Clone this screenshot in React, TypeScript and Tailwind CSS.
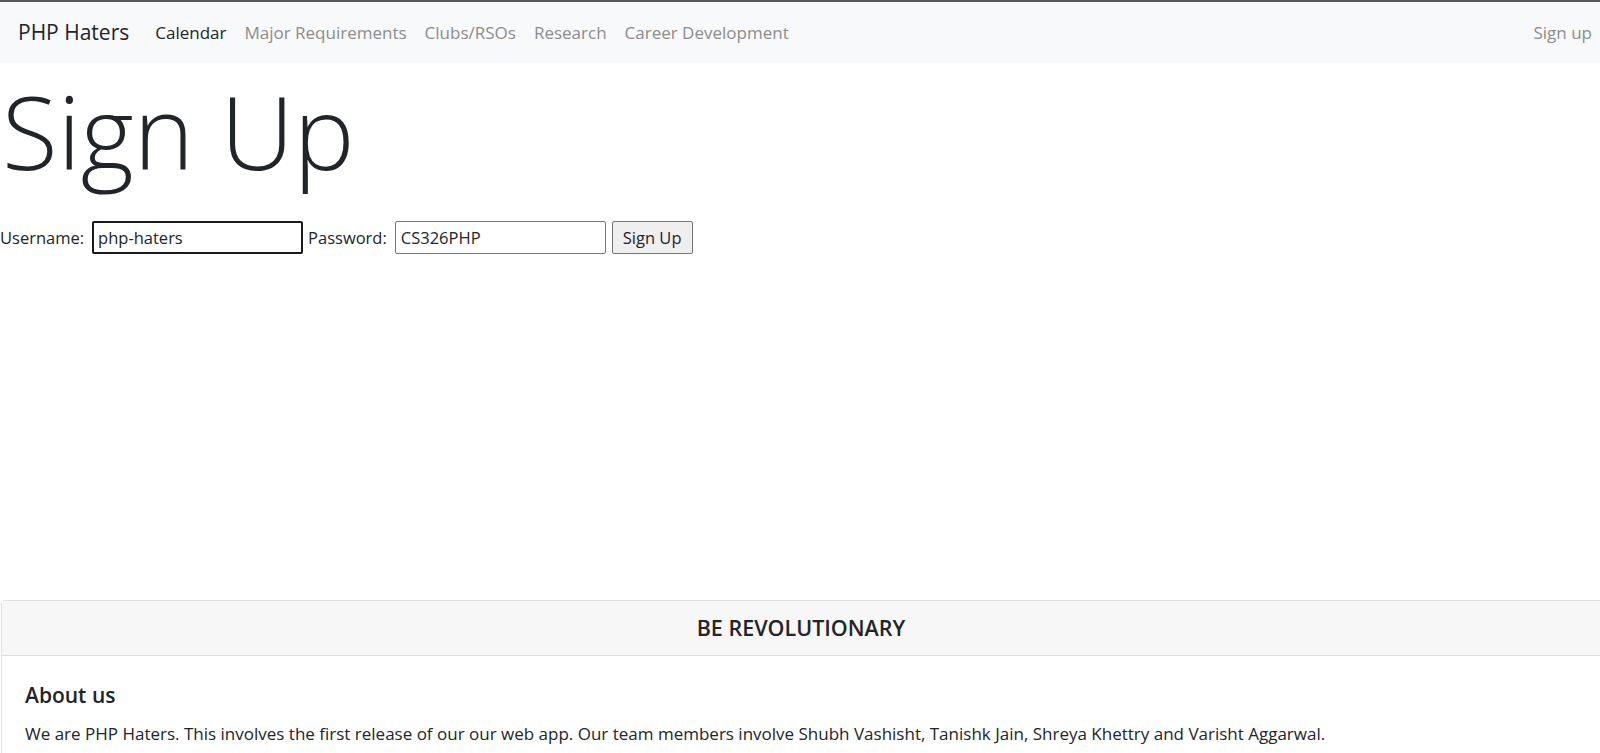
import { useState } from 'react';

const NAV_LINKS = ['Major Requirements', 'Clubs/RSOs', 'Research', 'Career Development'];

export default function App() {
  const [username, setUsername] = useState('php-haters');
  const [password, setPassword] = useState('CS326PHP');

  return (
    <div className="min-h-screen bg-white text-[#212529] font-['Open_Sans',sans-serif]">
      <div className="h-[2px] bg-[#5a5a5a]" />

      {/* Navbar */}
      <nav className="h-[61px] bg-[#f8f9fa] flex items-center pl-[18px]">
        <span className="text-[21px] text-[#212529] mr-[17px]">PHP Haters</span>
        <a className="px-[9px] text-[17px] text-[#212529]">Calendar</a>
        {NAV_LINKS.map((link) => (
          <a key={link} className="px-[9px] text-[17px] text-[#8c8c8c]">
            {link}
          </a>
        ))}
        <a className="ml-auto pl-[9px] pr-[8px] text-[17px] text-[#8c8c8c]">Sign up</a>
      </nav>

      {/* Sign up form */}
      <h1 className="text-[102px] font-light leading-[1.2] pl-[2px] mt-[7px]">Sign Up</h1>
      <form
        className="flex items-center mt-[29px] text-[16.5px]"
        onSubmit={(e) => e.preventDefault()}
      >
        <label className="mr-[8px]">Username:</label>
        <input
          value={username}
          onChange={(e) => setUsername(e.target.value)}
          className="w-[211px] h-[33px] px-[4px] border-2 border-[#1a1a1a] rounded-[2px] outline-none text-[16.5px]"
        />
        <label className="ml-[5px] mr-[8px]">Password:</label>
        <input
          value={password}
          onChange={(e) => setPassword(e.target.value)}
          className="w-[211px] h-[33px] px-[5px] border border-[#767676] rounded-[2px] outline-none text-[16.5px]"
        />
        <button className="ml-[6px] h-[33px] px-[10px] border border-[#767676] rounded-[2px] bg-[#efefef] text-[16.5px]">
          Sign Up
        </button>
      </form>

      {/* Card */}
      <div className="mt-[346px] ml-[1px] border border-r-0 border-[#dfdfdf] rounded-tl-[4px]">
        <div className="h-[55px] bg-[#f7f7f7] border-b border-[#dfdfdf] flex items-center justify-center text-[21.5px] font-semibold">
          BE REVOLUTIONARY
        </div>
        <div className="px-[23px] pt-[27px] pb-[16px]">
          <h5 className="text-[21px] font-semibold leading-[1.2] mb-[12px]">About us</h5>
          <p className="text-[17px] leading-[1.5]">
            We are PHP Haters. This involves the first release of our our web app. Our team members involve Shubh Vashisht, Tanishk Jain, Shreya Khettry and Varisht Aggarwal.
          </p>
        </div>
      </div>
    </div>
  );
}
